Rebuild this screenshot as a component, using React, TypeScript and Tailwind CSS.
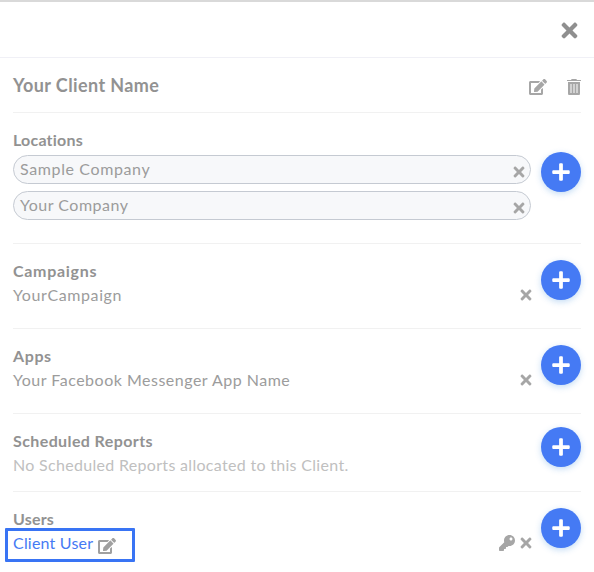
import type { ReactNode } from 'react';
import { FaEdit, FaKey, FaPlus, FaTimes } from 'react-icons/fa';

function TrashIcon({ className }: { className?: string }) {
  return (
    <svg viewBox="0 0 14 16" className={className} fill="currentColor">
      <path d="M0 1h4l.7-1h4.600l.7 1H14v1H0z" />
      <path d="M1 3h12v11.500A1.500 1.500 0 0 1 11.500 16h-9A1.500 1.500 0 0 1 1 14.500z" opacity="0.5" />
      <path d="M1 3h12v11.500A1.500 1.500 0 0 1 11.500 16h-9A1.500 1.500 0 0 1 1 14.500zM3 5v9h2V5zM6 5v9h2V5zM9 5v9h2V5z" fillRule="evenodd" />
    </svg>
  );
}

function AddButton({ className = '' }: { className?: string }) {
  return (
    <button
      aria-label="Add"
      className={`flex size-10 shrink-0 items-center justify-center rounded-full bg-[#457af4] text-white shadow-[0_2px_6px_rgba(60,140,220,0.3)] ${className}`}
    >
      <FaPlus className="size-5" />
    </button>
  );
}

type SectionProps = {
  title: string;
  className?: string;
  titleClass: string;
  buttonClass?: string;
  children: ReactNode;
};

function Section({ title, className = '', titleClass, buttonClass = 'mt-px', children }: SectionProps) {
  return (
    <section className={`flex items-start gap-2.5 border-b border-[#f1f1f1] pt-[15px] ${className}`}>
      <div className="min-w-0 flex-1">
        <h2 className={`text-[16px] leading-6 font-bold text-[#929292] ${titleClass}`}>{title}</h2>
        {children}
      </div>
      <AddButton className={buttonClass} />
    </section>
  );
}

const LOCATIONS = [
  { name: 'Sample Company', tracking: 'tracking-[0.62px]' },
  { name: 'Your Company', tracking: 'tracking-[0.5px]' },
];

export default function App() {
  return (
    <div className="h-[572px] w-full overflow-hidden border-t-2 border-[#d9d9d9] bg-white font-[Lato,sans-serif] text-[#9c9c9c]">
      <header className="flex h-14 items-center justify-end border-b border-[#f0f0f6] pr-[13px]">
        <button aria-label="Close" className="mt-px text-[#8f8f8f]">
          <FaTimes className="size-[23px]" />
        </button>
      </header>

      <main className="px-[13px]">
        <div className="flex h-[55px] items-center border-b border-[#f1f1f1]">
          <h1 className="flex-1 text-[18px] font-bold tracking-[0.4px] text-[#929292]">Your Client Name</h1>
          <FaEdit className="mt-1 mr-5 size-[18px] text-[#a6a6a6]" />
          <TrashIcon className="mt-1 h-4 w-3.5 text-[#a6a6a6]" />
        </div>

        <Section title="Locations" titleClass="tracking-[0.2px]" className="h-[131px]" buttonClass="mt-6">
          <div className="mt-[3px] space-y-[7px]">
            {LOCATIONS.map((l) => (
              <div key={l.name} className="flex h-[29px] items-center rounded-full border border-[#c5cad2] bg-[#f7f8fa] pr-[3px] pl-1.5">
                <span className={`-mt-0.5 flex-1 text-[16px] ${l.tracking}`}>{l.name}</span>
                <FaTimes className="mt-1 size-4 text-[#a6a6a6]" />
              </div>
            ))}
          </div>
        </Section>

        <Section title="Campaigns" titleClass="tracking-[0.7px]" className="h-[85px]">
          <div className="flex h-6 items-center">
            <span className="flex-1 text-[16px] tracking-[0.6px]">YourCampaign</span>
            <FaTimes className="-mr-[3px] size-4 text-[#a6a6a6]" />
          </div>
        </Section>

        <Section title="Apps" titleClass="tracking-[0.6px]" className="h-[85px]">
          <div className="flex h-6 items-center">
            <span className="flex-1 text-[16px] tracking-[0.5px]">Your Facebook Messenger App Name</span>
            <FaTimes className="-mr-[3px] size-4 text-[#a6a6a6]" />
          </div>
        </Section>

        <Section title="Scheduled Reports" titleClass="tracking-[0.4px]" className="h-[78px]" buttonClass="-mt-0.5">
          <p className="text-[16px] leading-6 tracking-[0.31px] text-[#c0c0c0]">No Scheduled Reports allocated to this Client.</p>
        </Section>

        <Section title="Users" titleClass="tracking-[0.2px]" className="border-b-0">
          <div className="-mt-[3px] -ml-2 flex items-start">
            <div className="flex h-[34px] w-[130px] items-center rounded-[1px] border-3 border-[#3974f4] pl-[5px]">
              <span className="-mt-1 text-[16px] tracking-[0.2px] text-[#457af4]">Client User</span>
              <FaEdit className="mt-0.5 ml-[5px] size-[18px] text-[#a0a0a0]" />
            </div>
            <div className="mt-[7px] -mr-[3px] ml-auto flex items-center gap-[3px]">
              <FaKey className="size-4 text-[#a6a6a6]" />
              <FaTimes className="size-4 text-[#a6a6a6]" />
            </div>
          </div>
        </Section>
      </main>
    </div>
  );
}
